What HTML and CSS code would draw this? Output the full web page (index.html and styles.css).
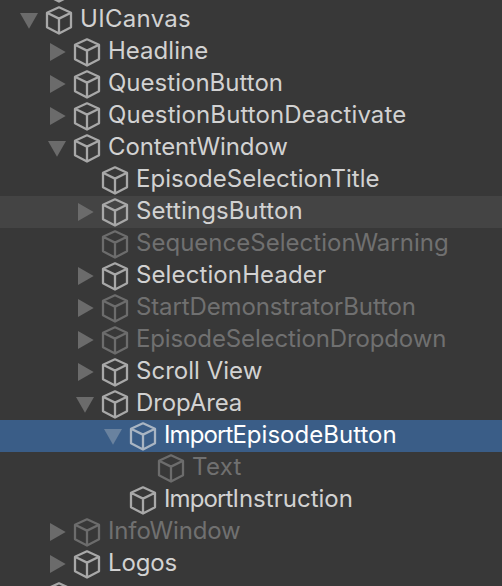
FILE: index.html
```
<!DOCTYPE html>
<html lang="en">
<head>
<meta charset="utf-8">
<title>Hierarchy</title>
<link rel="stylesheet" href="styles.css">
</head>
<body>
<svg class="defs" aria-hidden="true">
  <symbol id="cube" viewBox="0 0 28 30">
    <path d="M14 2.3 26 7.7V22.3L14 28.6 2 22.3V7.7ZM2 7.7 14 13.6 26 7.7M14 13.6V28.6"/>
  </symbol>
  <symbol id="down" viewBox="0 0 18 18"><path d="M0 0H18L9 15.7Z"/></symbol>
  <symbol id="right" viewBox="0 0 18 18"><path d="M0 0V18L15.7 9Z"/></symbol>
</svg>
<ul class="tree">
  <li class="row"><span class="fold"></span><svg class="cube"><use href="#cube"/></svg></li>
  <li class="row"><svg class="fold down"><use href="#down"/></svg><svg class="cube"><use href="#cube"/></svg><span class="name loose">UICanvas</span></li>
  <li class="row d1"><svg class="fold"><use href="#right"/></svg><svg class="cube"><use href="#cube"/></svg><span class="name">Headline</span></li>
  <li class="row d1"><svg class="fold"><use href="#right"/></svg><svg class="cube"><use href="#cube"/></svg><span class="name">QuestionButton</span></li>
  <li class="row d1"><svg class="fold"><use href="#right"/></svg><svg class="cube"><use href="#cube"/></svg><span class="name open">QuestionButtonDeactivate</span></li>
  <li class="row d1"><svg class="fold down"><use href="#down"/></svg><svg class="cube"><use href="#cube"/></svg><span class="name snug">ContentWindow</span></li>
  <li class="row d2"><span class="fold"></span><svg class="cube"><use href="#cube"/></svg><span class="name">EpisodeSelectionTitle</span></li>
  <li class="row d2 hover"><svg class="fold"><use href="#right"/></svg><svg class="cube"><use href="#cube"/></svg><span class="name open">SettingsButton</span></li>
  <li class="row d2 off"><span class="fold"></span><svg class="cube"><use href="#cube"/></svg><span class="name">SequenceSelectionWarning</span></li>
  <li class="row d2"><svg class="fold"><use href="#right"/></svg><svg class="cube"><use href="#cube"/></svg><span class="name open">SelectionHeader</span></li>
  <li class="row d2 off"><svg class="fold"><use href="#right"/></svg><svg class="cube"><use href="#cube"/></svg><span class="name snug">StartDemonstratorButton</span></li>
  <li class="row d2 off"><svg class="fold"><use href="#right"/></svg><svg class="cube"><use href="#cube"/></svg><span class="name snug">EpisodeSelectionDropdown</span></li>
  <li class="row d2"><svg class="fold"><use href="#right"/></svg><svg class="cube"><use href="#cube"/></svg><span class="name">Scroll View</span></li>
  <li class="row d2"><svg class="fold down"><use href="#down"/></svg><svg class="cube"><use href="#cube"/></svg><span class="name snug">DropArea</span></li>
  <li class="row d3 selected"><svg class="fold down"><use href="#down"/></svg><svg class="cube"><use href="#cube"/></svg><span class="name"><span class="tight">Import</span>EpisodeButton</span></li>
  <li class="row d4 off"><span class="fold"></span><svg class="cube"><use href="#cube"/></svg><span class="name loose">Text</span></li>
  <li class="row d3"><span class="fold"></span><svg class="cube"><use href="#cube"/></svg><span class="name"><span class="tight">Import</span>Instruction</span></li>
  <li class="row d1 off"><svg class="fold"><use href="#right"/></svg><svg class="cube"><use href="#cube"/></svg><span class="name snug">InfoWindow</span></li>
  <li class="row d1"><svg class="fold"><use href="#right"/></svg><svg class="cube"><use href="#cube"/></svg><span class="name snug">Logos</span></li>
  <li class="row"><span class="fold"></span><svg class="cube"><use href="#cube"/></svg></li>
</ul>
</body>
</html>
```
FILE: styles.css
```
body {
  margin: 0;
  background: #383838;
  color: #d2d2d2;
  font-family: Inter, "Liberation Sans", sans-serif;
  font-size: 24px;
}

.defs {
  display: none;
}

.tree {
  display: flex;
  flex-direction: column;
  height: 586px;
  margin: 0;
  padding: 0;
  overflow: hidden;
  list-style: none;
}

.row {
  display: flex;
  flex: none;
  height: 32px;
  padding-left: 20px;
}

.row:first-child {
  margin-top: -28px;
}

.d1 { padding-left: 48px; }
.d2 { padding-left: 76px; }
.d3 { padding-left: 104px; }
.d4 { padding-left: 132px; }

.fold {
  flex: none;
  width: 18px;
  height: 18px;
  margin: 7px 5px 0 2px;
  fill: #6b6b6b;
}

.fold.down {
  margin: 9px 7px 0 0;
}

.cube {
  flex: none;
  width: 28px;
  height: 30px;
  margin-top: 1px;
  fill: none;
  stroke: #a8a8a8;
  stroke-width: 2.3;
  stroke-linejoin: round;
}

.name {
  margin-left: 7px;
  line-height: 29px;
  letter-spacing: 0.02px;
  white-space: nowrap;
}

.loose { letter-spacing: 0.3px; }
.open { letter-spacing: 0.11px; }
.snug { letter-spacing: -0.13px; }
.tight { letter-spacing: -0.9px; }

.hover {
  background: #444444;
}

.off {
  color: #707070;
}

.off .cube {
  stroke: #6c6c6c;
}

.selected {
  background: #3a5d87;
  color: #ffffff;
}

.selected .fold {
  fill: #69829f;
}

.selected .cube {
  stroke: #a9b5c3;
}
```
